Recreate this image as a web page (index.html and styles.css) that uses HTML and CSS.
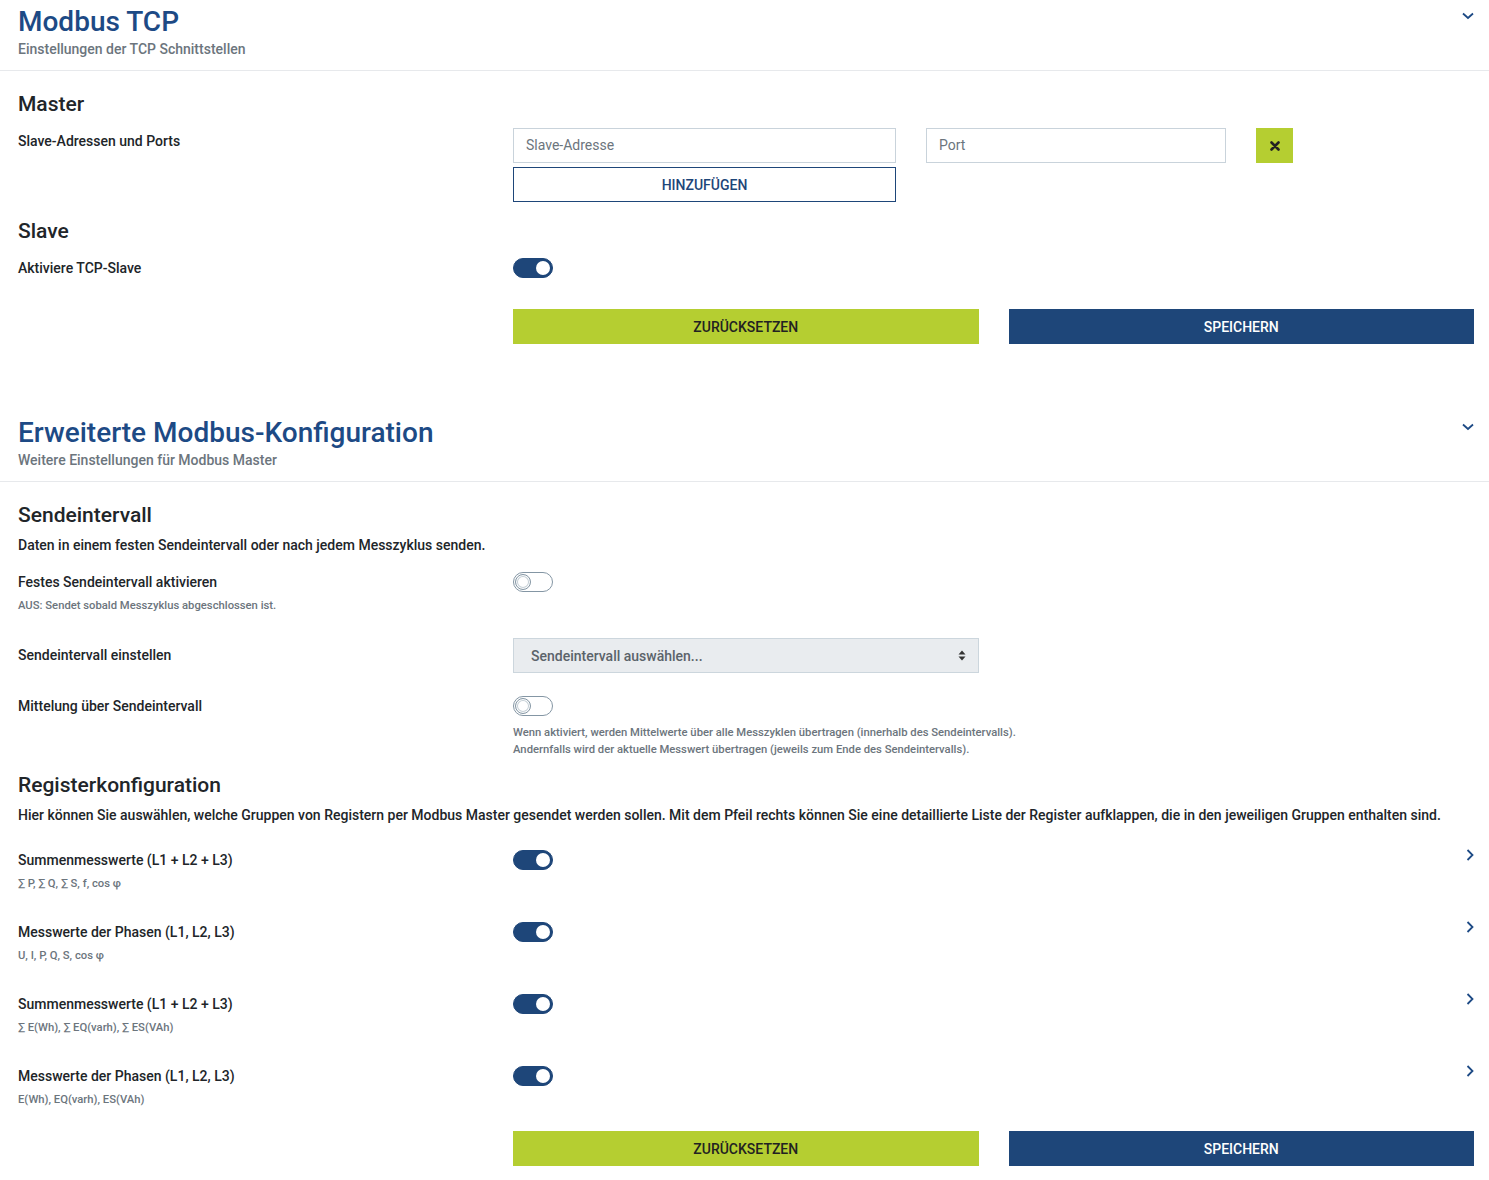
FILE: index.html
```html
<!DOCTYPE html>
<html lang="de">
<head>
<meta charset="utf-8">
<title>Modbus TCP</title>
<link rel="stylesheet" href="styles.css">
</head>
<body>
<section class="panel">
  <header class="panel-head">
    <div>
      <h1 class="panel-title">Modbus TCP</h1>
      <p class="panel-sub">Einstellungen der TCP Schnittstellen</p>
    </div>
    <svg class="chev-down" viewBox="0 0 12 8"><path d="M1 1.5 L6 6 L11 1.5" fill="none" stroke="#1d4a85" stroke-width="1.8"/></svg>
  </header>
  <div class="panel-body">
    <h2 class="sec-title">Master</h2>
    <div class="form-row">
      <div class="label">Slave-Adressen und Ports</div>
      <div class="addr-grid">
        <div class="input">Slave-Adresse</div>
        <div class="input">Port</div>
        <button class="btn-x" type="button"><svg viewBox="0 0 10 10"><path d="M1.5 1.5 L8.5 8.5 M8.5 1.5 L1.5 8.5" stroke="#222" stroke-width="2.6" stroke-linecap="round"/></svg></button>
        <button class="btn-outline" type="button">HINZUFÜGEN</button>
      </div>
    </div>
    <h2 class="sec-title mt-17">Slave</h2>
    <div class="form-row">
      <div class="label">Aktiviere TCP-Slave</div>
      <div class="control"><span class="switch on"><span class="knob"></span></span></div>
    </div>
    <div class="form-row actions mt-30">
      <div></div>
      <div class="btn-pair">
        <button class="btn btn-green" type="button">ZURÜCKSETZEN</button>
        <button class="btn btn-blue" type="button">SPEICHERN</button>
      </div>
    </div>
  </div>
</section>

<section class="panel panel-second">
  <header class="panel-head">
    <div>
      <h1 class="panel-title">Erweiterte Modbus-Konfiguration</h1>
      <p class="panel-sub">Weitere Einstellungen für Modbus Master</p>
    </div>
    <svg class="chev-down" viewBox="0 0 12 8"><path d="M1 1.5 L6 6 L11 1.5" fill="none" stroke="#1d4a85" stroke-width="1.8"/></svg>
  </header>
  <div class="panel-body">
    <h2 class="sec-title sm-gap">Sendeintervall</h2>
    <p class="desc">Daten in einem festen Sendeintervall oder nach jedem Messzyklus senden.</p>

    <div class="form-row mt-13">
      <div class="label">Festes Sendeintervall aktivieren<small class="hint">AUS: Sendet sobald Messzyklus abgeschlossen ist.</small></div>
      <div class="control"><span class="switch"><span class="knob"></span></span></div>
    </div>

    <div class="form-row mt-24">
      <div class="label label-select">Sendeintervall einstellen</div>
      <div class="control">
        <div class="select">
          <span>Sendeintervall auswählen...</span>
          <svg viewBox="0 0 8 11"><path d="M4 0.5 L7.5 4.5 L0.5 4.5 Z M4 10.5 L7.5 6.5 L0.5 6.5 Z" fill="#333"/></svg>
        </div>
      </div>
    </div>

    <div class="form-row mt-20">
      <div class="label">Mittelung über Sendeintervall</div>
      <div class="control">
        <span class="switch"><span class="knob"></span></span>
        <small class="hint help">Wenn aktiviert, werden Mittelwerte über alle Messzyklen übertragen (innerhalb des Sendeintervalls).<br>Andernfalls wird der aktuelle Messwert übertragen (jeweils zum Ende des Sendeintervalls).</small>
      </div>
    </div>

    <h2 class="sec-title sm-gap mt-15">Registerkonfiguration</h2>
    <p class="desc">Hier können Sie auswählen, welche Gruppen von Registern per Modbus Master gesendet werden sollen. Mit dem Pfeil rechts können Sie eine detaillierte Liste der Register aufklappen, die in den jeweiligen Gruppen enthalten sind.</p>

    <div class="form-row reg-first">
      <div class="label">Summenmesswerte (L1 + L2 + L3)<small class="hint">∑ P, ∑ Q, ∑ S, f, cos φ</small></div>
      <div class="control split"><span class="switch on"><span class="knob"></span></span><svg class="chev-right" viewBox="0 0 8 12"><path d="M1.5 1 L6.5 6 L1.5 11" fill="none" stroke="#1d4a85" stroke-width="1.8"/></svg></div>
    </div>
    <div class="form-row reg">
      <div class="label">Messwerte der Phasen (L1, L2, L3)<small class="hint">U, I, P, Q, S, cos φ</small></div>
      <div class="control split"><span class="switch on"><span class="knob"></span></span><svg class="chev-right" viewBox="0 0 8 12"><path d="M1.5 1 L6.5 6 L1.5 11" fill="none" stroke="#1d4a85" stroke-width="1.8"/></svg></div>
    </div>
    <div class="form-row reg">
      <div class="label">Summenmesswerte (L1 + L2 + L3)<small class="hint">∑ E(Wh), ∑ EQ(varh), ∑ ES(VAh)</small></div>
      <div class="control split"><span class="switch on"><span class="knob"></span></span><svg class="chev-right" viewBox="0 0 8 12"><path d="M1.5 1 L6.5 6 L1.5 11" fill="none" stroke="#1d4a85" stroke-width="1.8"/></svg></div>
    </div>
    <div class="form-row reg">
      <div class="label">Messwerte der Phasen (L1, L2, L3)<small class="hint">E(Wh), EQ(varh), ES(VAh)</small></div>
      <div class="control split"><span class="switch on"><span class="knob"></span></span><svg class="chev-right" viewBox="0 0 8 12"><path d="M1.5 1 L6.5 6 L1.5 11" fill="none" stroke="#1d4a85" stroke-width="1.8"/></svg></div>
    </div>

    <div class="form-row actions mt-23">
      <div></div>
      <div class="btn-pair">
        <button class="btn btn-green" type="button">ZURÜCKSETZEN</button>
        <button class="btn btn-blue" type="button">SPEICHERN</button>
      </div>
    </div>
  </div>
</section>
</body>
</html>
```

FILE: styles.css
```css
* { box-sizing: border-box; }

body {
  margin: 0;
  background: #fff;
  color: #212529;
  font-family: Roboto, "Liberation Sans", Arial, sans-serif;
}

.panel-second { margin-top: 67px; }

.panel-head {
  display: flex;
  justify-content: space-between;
  align-items: flex-start;
  padding: 5px 15px 10px 18px;
  border-bottom: 1px solid #e7e9ec;
}

.panel-title {
  margin: 0;
  font-size: 28px;
  line-height: 34px;
  font-weight: 500;
  color: #1d4a85;
}

.panel-sub {
  margin: 0;
  font-size: 14px;
  line-height: 21px;
  font-weight: 500;
  color: #6c757d;
}

.chev-down {
  width: 12px;
  height: 8px;
  margin-top: 7px;
  display: block;
}

.panel-body {
  padding: 21px 15px 0 18px;
}

.sec-title {
  margin: 0 0 12px;
  font-size: 21px;
  line-height: 24px;
  font-weight: 500;
  color: #212529;
}
.sec-title.sm-gap { margin-bottom: 8px; }

.desc {
  margin: 0;
  font-size: 14px;
  line-height: 21px;
  font-weight: 500;
}

.mt-13 { margin-top: 13px; }
.mt-15 { margin-top: 15px; }
.mt-17 { margin-top: 17px; }
.mt-20 { margin-top: 20px; }
.mt-23 { margin-top: 23px; }
.mt-24 { margin-top: 24px; }
.mt-30 { margin-top: 30px; }

.form-row {
  display: grid;
  grid-template-columns: 465px 1fr;
  column-gap: 30px;
}
.reg-first { margin-top: 21px; }
.reg { margin-top: 27px; }

.label {
  padding-top: 3px;
  font-size: 14px;
  line-height: 21px;
  font-weight: 500;
  color: #212529;
}
.label-select { padding-top: 7px; }

.hint {
  display: block;
  margin-top: 4px;
  font-size: 11.25px;
  line-height: 17px;
  font-weight: 500;
  color: #6c757d;
}
.hint.help { margin-top: 8px; }

.control { min-width: 0; }
.control.split {
  display: flex;
  justify-content: space-between;
  align-items: flex-start;
}

.addr-grid {
  display: grid;
  grid-template-columns: 383px 300px 37px;
  column-gap: 30px;
  row-gap: 4px;
}

.input {
  height: 35px;
  border: 1px solid #c9d3db;
  padding: 0 12px;
  font-size: 14px;
  line-height: 33px;
  color: #6c757d;
  background: #fff;
}

.btn-x {
  width: 37px;
  height: 35px;
  border: 0;
  padding: 0;
  background: #b5ce31;
  display: flex;
  align-items: center;
  justify-content: center;
}
.btn-x svg { width: 10px; height: 10px; display: block; }

.btn-outline {
  grid-column: 1;
  height: 35px;
  border: 1px solid #1e4679;
  background: #fff;
  color: #1e4679;
  font-family: inherit;
  font-size: 14px;
  font-weight: 500;
  padding: 0;
}

.switch {
  display: flex;
  align-items: center;
  width: 40px;
  height: 20px;
  margin-top: 3px;
  border-radius: 10px;
  border: 1px solid #8496a4;
  background: #fff;
  padding: 1px;
}
.switch .knob {
  width: 16px;
  height: 16px;
  border-radius: 50%;
  border: 1px solid #8496a4;
  box-shadow: inset 0 0 0 1px #fff, inset 0 0 0 2px #c5cfd6;
  background: #fff;
}
.switch.on {
  justify-content: flex-end;
  background: #1e4679;
  border-color: #1e4679;
  padding: 2px;
}
.switch.on .knob {
  width: 14px;
  height: 14px;
  border: 0;
  box-shadow: none;
}

.chev-right {
  width: 8px;
  height: 12px;
  margin-top: 2px;
  display: block;
}

.select {
  width: 466px;
  height: 35px;
  display: flex;
  align-items: center;
  justify-content: space-between;
  padding: 0 12px 0 17px;
  background: #e9ecef;
  border: 1px solid #ccd6dd;
  font-size: 14px;
  font-weight: 500;
  color: #5b636a;
}
.select svg { width: 8px; height: 11px; display: block; }

.btn-pair {
  display: grid;
  grid-template-columns: 1fr 1fr;
  column-gap: 30px;
}

.btn {
  height: 35px;
  border: 0;
  padding: 0;
  font-family: inherit;
  font-size: 14px;
  font-weight: 500;
}
.btn-green { background: #b5ce31; color: #222; }
.btn-blue { background: #1e4679; color: #fff; }
```
